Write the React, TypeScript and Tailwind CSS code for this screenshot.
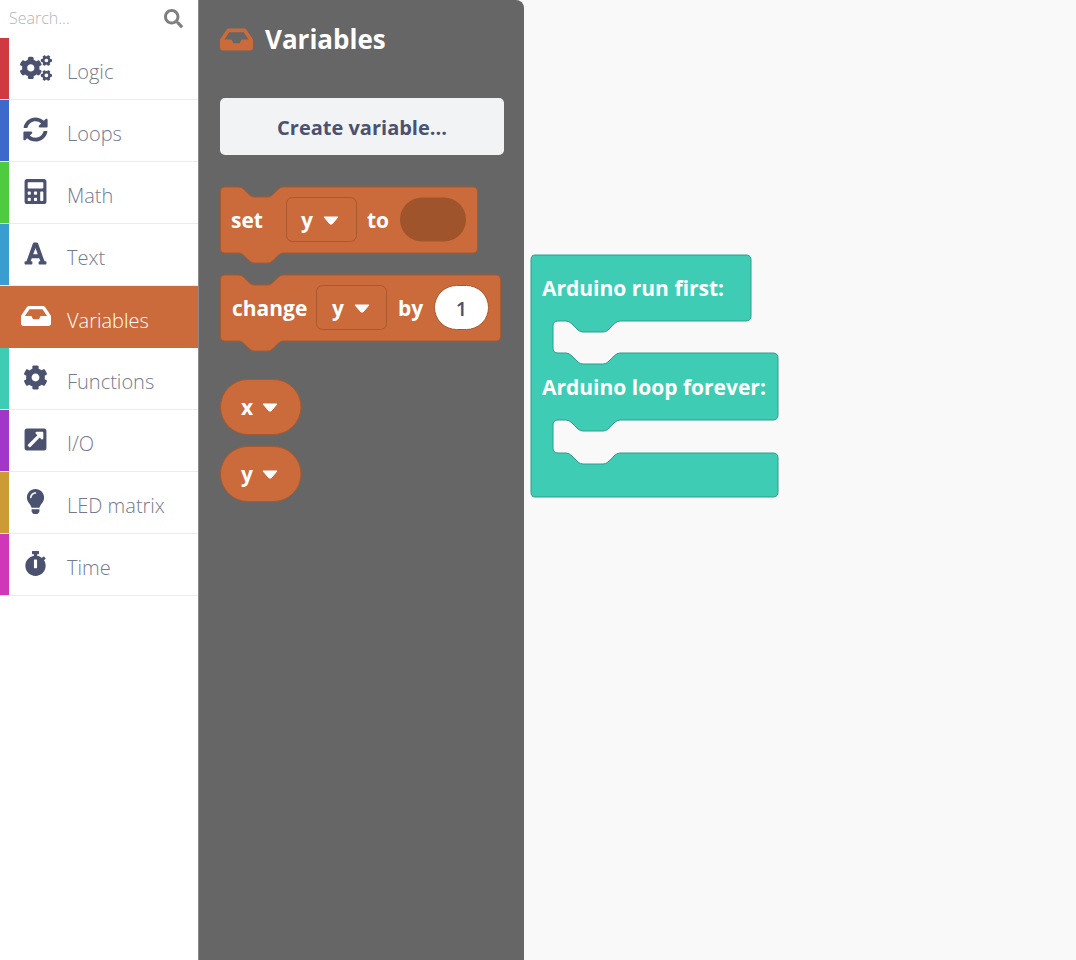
import type { ComponentType } from "react";
import {
  FaCalculator,
  FaCog,
  FaCogs,
  FaExternalLinkSquareAlt,
  FaFont,
  FaInbox,
  FaLightbulb,
  FaSearch,
  FaStopwatch,
  FaSyncAlt,
} from "react-icons/fa";

type Category = {
  label: string;
  strip: string;
  Icon: ComponentType<{ className?: string }>;
  iconSize: string;
};

const categories: Category[] = [
  { label: "Logic", strip: "bg-[#d0393f]", Icon: FaCogs, iconSize: "text-[32px]" },
  { label: "Loops", strip: "bg-[#3d68cc]", Icon: FaSyncAlt, iconSize: "text-[25px]" },
  { label: "Math", strip: "bg-[#4fcb3f]", Icon: FaCalculator, iconSize: "text-[25px]" },
  { label: "Text", strip: "bg-[#3a9dd0]", Icon: FaFont, iconSize: "text-[25px]" },
  { label: "Variables", strip: "bg-[#cb6a3a]", Icon: FaInbox, iconSize: "text-[30px]" },
  { label: "Functions", strip: "bg-[#3ecdb4]", Icon: FaCog, iconSize: "text-[25px]" },
  { label: "I/O", strip: "bg-[#a236c8]", Icon: FaExternalLinkSquareAlt, iconSize: "text-[25px]" },
  { label: "LED matrix", strip: "bg-[#cb9b35]", Icon: FaLightbulb, iconSize: "text-[25px]" },
  { label: "Time", strip: "bg-[#cf36b8]", Icon: FaStopwatch, iconSize: "text-[25px]" },
];

const font = "'Open Sans', 'Noto Sans', sans-serif";
const orange = "#cb6a3a";
const orangeEdge = "#a75a30";

// stack block outline with the notch on top and the tab below
function stackPath(w: number, h: number) {
  const x = 0.5;
  const y = 1;
  return [
    `M${x + 4} ${y}`,
    `H${x + 18} Q${x + 21} ${y} ${x + 23} ${y + 2} L${x + 29} ${y + 8} Q${x + 31} ${y + 10} ${x + 34} ${y + 10}`,
    `H${x + 47} Q${x + 50} ${y + 10} ${x + 52} ${y + 8} L${x + 58} ${y + 2} Q${x + 60} ${y} ${x + 63} ${y}`,
    `H${x + w - 4} Q${x + w} ${y} ${x + w} ${y + 4} V${y + h - 4} Q${x + w} ${y + h} ${x + w - 4} ${y + h}`,
    `H${x + 63} Q${x + 60} ${y + h} ${x + 58} ${y + h + 2} L${x + 52} ${y + h + 8} Q${x + 50} ${y + h + 10} ${x + 47} ${y + h + 10}`,
    `H${x + 34} Q${x + 31} ${y + h + 10} ${x + 29} ${y + h + 8} L${x + 23} ${y + h + 2} Q${x + 21} ${y + h} ${x + 18} ${y + h}`,
    `H${x + 4} Q${x} ${y + h} ${x} ${y + h - 4} V${y + 4} Q${x} ${y} ${x + 4} ${y} Z`,
  ].join(" ");
}

function Caret({ x, y }: { x: number; y: number }) {
  return <path d={`M${x} ${y} H${x + 14} L${x + 8} ${y + 7} H${x + 6} Z`} fill="#fff" stroke="#fff" strokeWidth="1" strokeLinejoin="round" />;
}

function Label({ x, y, children, size = 21 }: { x: number; y: number; children: string; size?: number }) {
  return (
    <text x={x} y={y} fill="#fff" fontSize={size} fontWeight={700} fontFamily={font}>
      {children}
    </text>
  );
}

function SetBlock() {
  return (
    <svg width="260" height="78" className="block">
      <path d={stackPath(257, 66)} fill={orange} stroke={orangeEdge} strokeWidth="1" />
      <Label x={11} y={42}>set</Label>
      <rect x="66.5" y="11.5" width="70" height="44" rx="6" fill={orange} stroke={orangeEdge} />
      <Label x={81} y={42}>y</Label>
      <Caret x={104} y={31} />
      <Label x={147} y={42}>to</Label>
      <rect x="180" y="11.5" width="66" height="44" rx="22" fill="#9f542c" />
    </svg>
  );
}

function ChangeBlock() {
  return (
    <svg width="282" height="78" className="block">
      <path d={stackPath(280, 66)} fill={orange} stroke={orangeEdge} strokeWidth="1" />
      <Label x={12} y={42}>change</Label>
      <rect x="96.5" y="11.5" width="70" height="44" rx="6" fill={orange} stroke={orangeEdge} />
      <Label x={112} y={42}>y</Label>
      <Caret x={135} y={31} />
      <Label x={178} y={42}>by</Label>
      <rect x="214.5" y="11.5" width="54" height="44" rx="22" fill="#fff" stroke={orangeEdge} />
      <text x="241.5" y="42" textAnchor="middle" fill="#4b5270" fontSize="20" fontWeight={600} fontFamily={font}>
        1
      </text>
    </svg>
  );
}

function VarBlock({ name }: { name: string }) {
  return (
    <svg width="82" height="57" className="block">
      <rect x="0.5" y="0.5" width="80.5" height="55" rx="27.5" fill={orange} stroke={orangeEdge} />
      <Label x={21} y={36}>{name}</Label>
      <Caret x={43} y={25} />
    </svg>
  );
}

// notch read right to left, for the underside of a block
function notch(y: number) {
  return `H90 Q87 ${y} 84 ${y + 3} L78 ${y + 9} Q76 ${y + 11} 73 ${y + 11} H53 Q50 ${y + 11} 48 ${y + 9} L42 ${y + 3} Q39 ${y} 36 ${y}`;
}

// same notch read left to right, for the top of the next block
function notchBack(y: number) {
  return `H36 Q39 ${y} 42 ${y + 3} L48 ${y + 9} Q50 ${y + 11} 53 ${y + 11} H73 Q76 ${y + 11} 78 ${y + 9} L84 ${y + 3} Q87 ${y} 90 ${y}`;
}

// Arduino run first / loop forever block, origin is its top-left corner
function ArduinoBlock() {
  const d = [
    "M5 1 H216 Q221 1 221 6 V62 Q221 67 216 67",
    notch(67),
    "H28 Q23 67 23 72 V94 Q23 99 28 99",
    notchBack(99),
    "H243 Q248 99 248 104 V161 Q248 166 243 166",
    notch(166),
    "H28 Q23 166 23 171 V194 Q23 199 28 199",
    notchBack(199),
    "H243 Q248 199 248 204 V238 Q248 243 243 243 H5 Q1 243 1 238 V6 Q1 1 5 1 Z",
  ].join(" ");
  return (
    <svg width="250" height="245" className="absolute left-[530px] top-[254px] block">
      <path d={d} fill="#3ecdb4" stroke="#2f9c8a" strokeWidth="1" />
      <Label x={12} y={42}>Arduino run first:</Label>
      <Label x={12} y={141}>Arduino loop forever:</Label>
    </svg>
  );
}

export default function App() {
  return (
    <div className="relative flex h-[960px] w-[1076px] overflow-hidden bg-[#f9f9f9] font-['Open_Sans',sans-serif]">
      {/* category list */}
      <aside className="w-[199px] shrink-0 border-r border-[#8a8a8a] bg-white">
        <div className="flex h-[38px] items-center justify-between pb-[2px] pl-[9px] pr-[15px]">
          <span className="text-[16px] font-light text-[#b4b4b4]">Search...</span>
          <FaSearch className="text-[19px] text-[#7f7f7f]" />
        </div>
        {categories.map(({ label, strip, Icon, iconSize }) => {
          const active = label === "Variables";
          return (
            <div key={label} className={`flex h-[62px] ${active ? "bg-[#cb6a3a]" : "border-b border-[#ececec]"}`}>
              <div className={`w-[9px] shrink-0 ${strip}`} />
              <div className="flex w-[53px] shrink-0 items-center justify-center pb-[2px]">
                <Icon className={`${iconSize} ${active ? "text-white" : "text-[#4b5270]"}`} />
              </div>
              <span className={`self-center pl-[5px] pt-[7px] text-[20px] font-light ${active ? "text-white" : "text-[#74798e]"}`}>
                {label}
              </span>
            </div>
          );
        })}
      </aside>

      {/* toolbox flyout */}
      <section className="flex w-[325px] shrink-0 flex-col rounded-tr-[8px] bg-[#666666] pl-[21px]">
        <div className="mt-[21px] flex h-[36px] items-center gap-[12px]">
          <FaInbox className="text-[33px] text-[#cb6a3a]" />
          <h2 className="text-[26px] font-bold text-white">Variables</h2>
        </div>
        <button className="mt-[41px] h-[57px] w-[284px] rounded-[5px] bg-[#f2f3f5] pt-[2px] text-[20px] font-bold text-[#4b5270]">
          Create variable...
        </button>
        <div className="mt-[31px]">
          <SetBlock />
        </div>
        <div className="mt-[10px]">
          <ChangeBlock />
        </div>
        <div className="mt-[27px]">
          <VarBlock name="x" />
        </div>
        <div className="mt-[10px]">
          <VarBlock name="y" />
        </div>
      </section>

      <ArduinoBlock />
    </div>
  );
}
